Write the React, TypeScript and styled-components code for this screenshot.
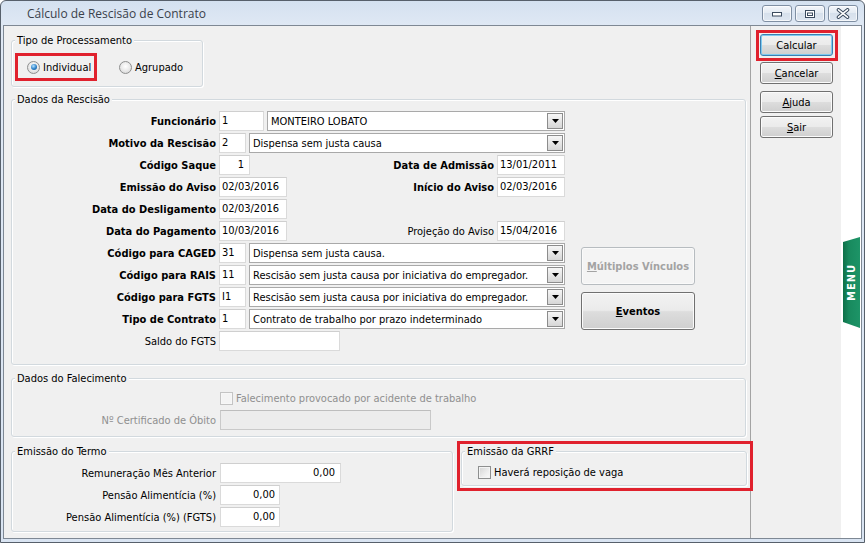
import React from 'react';
import styled, { createGlobalStyle } from 'styled-components';

const GlobalStyle = createGlobalStyle`
  html, body {
    margin: 0;
    padding: 0;
    background: #ffffff;
  }
  body {
    font-family: Tahoma, "DejaVu Sans Condensed", "Liberation Sans", sans-serif;
    font-size: 11px;
    color: #000;
  }
  *, *::before, *::after {
    box-sizing: border-box;
  }
`;

const Window = styled.div`
  width: 865px;
  height: 543px;
  display: flex;
  flex-direction: column;
  padding: 0 2px 3px 2px;
  border: 1px solid #57606b;
  border-radius: 6px 6px 0 0;
  background: linear-gradient(180deg, #d4e1f0 0px, #dfe8f4 24px, #d9e4f2 100%);
  overflow: hidden;
`;

const TitleBar = styled.div`
  height: 24px;
  flex-shrink: 0;
  display: flex;
  align-items: flex-start;
  padding-left: 24px;
`;

const Title = styled.span`
  flex: 1;
  padding-top: 1px;
  font-family: "Open Sans", "Noto Sans", sans-serif;
  font-size: 12px;
  line-height: 24px;
  color: #3a414b;
`;

const Controls = styled.div`
  display: flex;
  gap: 3px;
  margin: 4px 4px 0 0;
`;

const CaptionButton = styled.div`
  width: 30px;
  height: 17px;
  border: 1px solid #7f8fa3;
  border-radius: 3px;
  background: linear-gradient(180deg, #f3f6fa 0%, #e4ebf3 45%, #d6e0ec 50%, #dfe7f1 100%);
  box-shadow: inset 0 0 0 1px rgba(255, 255, 255, 0.7);
  display: flex;
  align-items: center;
  justify-content: center;
`;

const Client = styled.div`
  flex: 1;
  min-height: 0;
  display: flex;
  border: 1px solid #7e8894;
`;

const LeftPanel = styled.div`
  width: 747px;
  flex-shrink: 0;
  display: flex;
  flex-direction: column;
  padding: 14px 4px 0 7px;
  background: #f0f0f0;
  border-right: 1px solid #a3a3a3;
`;

const RightPanel = styled.div`
  width: 90px;
  flex-shrink: 0;
  display: flex;
  flex-direction: column;
  align-items: flex-start;
  padding: 4px 0 0 5px;
  background: #f0f0f0;
`;

const MenuStrip = styled.div`
  flex: 1;
  background: #ffffff;
  padding: 211px 0 0 2px;
`;

const MenuTab = styled.div`
  width: 17px;
  height: 91px;
  display: flex;
  align-items: center;
  justify-content: center;
  background: linear-gradient(90deg, #0d7048 0%, #188a5e 35%, #1d9467 100%);
  clip-path: polygon(0 5px, 100% 0, 100% 100%, 0 calc(100% - 6px));
`;

const MenuText = styled.span`
  writing-mode: vertical-rl;
  transform: rotate(180deg);
  color: #ffffff;
  font-weight: bold;
  font-size: 11px;
  letter-spacing: 1px;
`;

const Group = styled.div<{ $width?: number; $mt?: number }>`
  display: flex;
  flex-direction: column;
  flex-shrink: 0;
  width: ${(p) => (p.$width ? `${p.$width}px` : 'auto')};
  margin-top: ${(p) => p.$mt ?? 0}px;
  border: 1px solid #d2d9de;
  border-radius: 3px;
  box-shadow: inset 1px 1px 0 #ffffff, 1px 1px 0 #ffffff;
`;

const Caption = styled.div`
  align-self: flex-start;
  margin: -7px 0 0 3px;
  padding: 0 2px;
  line-height: 13px;
  background: #f0f0f0;
  white-space: nowrap;
`;

const GroupBody = styled.div<{ $pad: string; $mt: number }>`
  display: flex;
  margin-top: ${(p) => p.$mt}px;
  padding: ${(p) => p.$pad};
`;

const Highlight = styled.div<{ $pad: string; $width?: number }>`
  position: relative;
  z-index: 1;
  flex-shrink: 0;
  width: ${(p) => (p.$width ? `${p.$width}px` : 'auto')};
  padding: ${(p) => p.$pad};
  border: 3px solid #e0212d;
  display: flex;
  align-items: center;
`;

const Rows = styled.div`
  display: flex;
  flex-direction: column;
  gap: 2px;
`;

const Row = styled.div<{ $label?: number; $gap?: number; $width?: number }>`
  display: grid;
  grid-template-columns: ${(p) => p.$label ?? 196}px ${(p) => p.$width ?? 346}px;
  column-gap: ${(p) => p.$gap ?? 3}px;
  align-items: center;
  height: 20px;
`;

const Label = styled.span<{ $bold?: boolean; $muted?: boolean }>`
  text-align: right;
  white-space: nowrap;
  font-weight: ${(p) => (p.$bold ? 'bold' : 'normal')};
  color: ${(p) => (p.$muted ? '#8f8f8f' : '#000')};
`;

const Cell = styled.div`
  display: flex;
  align-items: center;
  gap: 3px;
  min-width: 0;
`;

const Side = styled.div`
  margin-left: auto;
  display: flex;
  align-items: center;
  gap: 3px;
`;

const Field = styled.div<{ $width: number; $right?: boolean; $disabled?: boolean; $pr?: number }>`
  width: ${(p) => p.$width}px;
  height: 20px;
  flex-shrink: 0;
  padding: 0 ${(p) => p.$pr ?? 3}px 0 2px;
  border: 1px solid ${(p) => (p.$disabled ? '#c9c9c9' : '#dadada')};
  border-top-color: ${(p) => (p.$disabled ? '#bdbdbd' : '#cfcfcf')};
  background: ${(p) => (p.$disabled ? '#ececec' : '#ffffff')};
  line-height: 18px;
  text-align: ${(p) => (p.$right ? 'right' : 'left')};
  white-space: nowrap;
  overflow: hidden;
`;

const Combo = styled.div<{ $width: number }>`
  width: ${(p) => p.$width}px;
  height: 20px;
  flex-shrink: 0;
  display: flex;
  align-items: center;
  padding: 0 1px 0 3px;
  border: 1px solid #a9a9a9;
  background: #ffffff;
`;

const ComboText = styled.span`
  flex: 1;
  white-space: nowrap;
  overflow: hidden;
`;

const ComboArrow = styled.span`
  width: 16px;
  height: 16px;
  display: flex;
  align-items: center;
  justify-content: center;
  border: 1px solid #8c8c8c;
  background: linear-gradient(180deg, #f6f6f6 0%, #e6e6e6 50%, #d6d6d6 100%);
`;

const RadioItem = styled.span`
  display: flex;
  align-items: center;
  gap: 3px;
  white-space: nowrap;
`;

const RadioDot = styled.span<{ $checked?: boolean }>`
  width: 13px;
  height: 13px;
  border-radius: 50%;
  border: 1px solid #8e8f8f;
  background: radial-gradient(circle at 50% 40%, #ffffff 0%, #e8e8e8 55%, #cfcfcf 100%);
  display: flex;
  align-items: center;
  justify-content: center;
  &::before {
    content: '';
    display: ${(p) => (p.$checked ? 'block' : 'none')};
    width: 6px;
    height: 6px;
    border-radius: 50%;
    background: radial-gradient(circle at 40% 35%, #b5e3ff 0%, #2a7fc8 55%, #124f86 100%);
  }
`;

const CheckItem = styled.span<{ $muted?: boolean; $ml?: number }>`
  display: flex;
  align-items: center;
  gap: 3px;
  margin-left: ${(p) => p.$ml ?? 0}px;
  white-space: nowrap;
  color: ${(p) => (p.$muted ? '#8f8f8f' : '#000')};
`;

const CheckBox = styled.span<{ $disabled?: boolean }>`
  width: 13px;
  height: 13px;
  flex-shrink: 0;
  border: 1px solid ${(p) => (p.$disabled ? '#c4c4c4' : '#8e8f8f')};
  background: ${(p) =>
    p.$disabled ? '#f4f4f4' : 'linear-gradient(135deg, #d3d3d3 0%, #eeeeee 60%, #fbfbfb 100%)'};
  box-shadow: inset 0 0 0 1px ${(p) => (p.$disabled ? '#f7f7f7' : '#f4f4f4')};
`;

const Button = styled.div<{ $default?: boolean; $mt?: number; $ml?: number }>`
  width: 73px;
  height: 22px;
  margin-top: ${(p) => p.$mt ?? 0}px;
  margin-left: ${(p) => p.$ml ?? 0}px;
  display: flex;
  align-items: center;
  justify-content: center;
  border: 1px solid ${(p) => (p.$default ? '#3c7fb1' : '#707070')};
  border-radius: 3px;
  background: linear-gradient(180deg, #f2f2f2 0%, #ebebeb 48%, #dddddd 52%, #cfcfcf 100%);
  box-shadow: inset 0 0 0 1px ${(p) => (p.$default ? '#7fcaf0' : '#fbfbfb')};
  white-space: nowrap;
`;

const BigButton = styled.div<{ $disabled?: boolean }>`
  width: 114px;
  height: 38px;
  display: flex;
  align-items: center;
  justify-content: center;
  font-weight: bold;
  border: 1px solid ${(p) => (p.$disabled ? '#b7bcc0' : '#707070')};
  border-radius: 3px;
  color: ${(p) => (p.$disabled ? '#a3a3a3' : '#000')};
  background: ${(p) =>
    p.$disabled
      ? '#f4f4f4'
      : 'linear-gradient(180deg, #f2f2f2 0%, #ebebeb 48%, #dddddd 52%, #cfcfcf 100%)'};
  box-shadow: inset 0 0 0 1px ${(p) => (p.$disabled ? '#fafafa' : '#fbfbfb')};
  white-space: nowrap;
`;

const SideButtons = styled.div`
  display: flex;
  flex-direction: column;
  gap: 7px;
  margin-left: 16px;
  padding-top: 136px;
`;

const BottomRow = styled.div`
  display: flex;
  align-items: flex-start;
  gap: 4px;
  margin-top: 4px;
`;

const Arrow = () => (
  <svg width="7" height="4" viewBox="0 0 7 4">
    <polygon points="0,0 7,0 3.5,4" fill="#000" />
  </svg>
);

const Input: React.FC<{ w: number; v?: string; right?: boolean; pr?: number; disabled?: boolean }> = ({
  w,
  v = '',
  right,
  pr,
  disabled,
}) => (
  <Field $width={w} $right={right} $pr={pr} $disabled={disabled}>
    {v}
  </Field>
);

const Select: React.FC<{ w: number; v: string }> = ({ w, v }) => (
  <Combo $width={w}>
    <ComboText>{v}</ComboText>
    <ComboArrow>
      <Arrow />
    </ComboArrow>
  </Combo>
);

const MOTIVO_RAIS = 'Rescisão sem justa causa por iniciativa do empregador.';

const App: React.FC = () => (
  <>
    <GlobalStyle />
    <Window>
      <TitleBar>
        <Title>Cálculo de Rescisão de Contrato</Title>
        <Controls>
          <CaptionButton>
            <svg width="12" height="6" viewBox="0 0 12 6">
              <rect x="1.5" y="1.5" width="9" height="3.5" fill="#fff" stroke="#3b4b5e" />
            </svg>
          </CaptionButton>
          <CaptionButton>
            <svg width="12" height="10" viewBox="0 0 12 10">
              <rect x="1.5" y="1.5" width="9" height="7" fill="#fff" stroke="#3b4b5e" />
              <rect x="3.5" y="4" width="5" height="2.5" fill="none" stroke="#3b4b5e" />
            </svg>
          </CaptionButton>
          <CaptionButton>
            <svg width="14" height="11" viewBox="0 0 14 11">
              <path d="M2.5 1.8 L11.5 9.2 M11.5 1.8 L2.5 9.2" stroke="#3b4b5e" strokeWidth="3.6" strokeLinecap="round" />
              <path d="M2.5 1.8 L11.5 9.2 M11.5 1.8 L2.5 9.2" stroke="#ffffff" strokeWidth="1.6" strokeLinecap="round" />
            </svg>
          </CaptionButton>
        </Controls>
      </TitleBar>
      <Client>
        <LeftPanel>
          <Group $width={192}>
            <Caption>Tipo de Processamento</Caption>
            <GroupBody $mt={6} $pad="0 0 5px 3px">
              <Highlight $width={82} $pad="0 0 0 9px" style={{ height: 28 }}>
                <RadioItem>
                  <RadioDot $checked />
                  Individual
                </RadioItem>
              </Highlight>
              <RadioItem style={{ marginLeft: 22 }}>
                <RadioDot />
                Agrupado
              </RadioItem>
            </GroupBody>
          </Group>

          <Group $mt={12}>
            <Caption>Dados da Rescisão</Caption>
            <GroupBody $mt={5} $pad="0 0 13px 8px">
              <Rows>
                <Row>
                  <Label $bold>Funcionário</Label>
                  <Cell>
                    <Input w={45} v="1" />
                    <Select w={298} v="MONTEIRO LOBATO" />
                  </Cell>
                </Row>
                <Row>
                  <Label $bold>Motivo da Rescisão</Label>
                  <Cell>
                    <Input w={27} v="2" />
                    <Select w={316} v="Dispensa sem justa causa" />
                  </Cell>
                </Row>
                <Row>
                  <Label $bold>Código Saque</Label>
                  <Cell>
                    <Input w={31} v="1" right pr={5} />
                    <Side>
                      <Label $bold>Data de Admissão</Label>
                      <Input w={68} v="13/01/2011" />
                    </Side>
                  </Cell>
                </Row>
                <Row>
                  <Label $bold>Emissão do Aviso</Label>
                  <Cell>
                    <Input w={68} v="02/03/2016" />
                    <Side>
                      <Label $bold>Início do Aviso</Label>
                      <Input w={68} v="02/03/2016" />
                    </Side>
                  </Cell>
                </Row>
                <Row>
                  <Label $bold>Data do Desligamento</Label>
                  <Cell>
                    <Input w={68} v="02/03/2016" />
                  </Cell>
                </Row>
                <Row>
                  <Label $bold>Data do Pagamento</Label>
                  <Cell>
                    <Input w={68} v="10/03/2016" />
                    <Side>
                      <Label>Projeção do Aviso</Label>
                      <Input w={68} v="15/04/2016" />
                    </Side>
                  </Cell>
                </Row>
                <Row>
                  <Label $bold>Código para CAGED</Label>
                  <Cell>
                    <Input w={27} v="31" />
                    <Select w={316} v="Dispensa sem justa causa." />
                  </Cell>
                </Row>
                <Row>
                  <Label $bold>Código para RAIS</Label>
                  <Cell>
                    <Input w={27} v="11" />
                    <Select w={316} v={MOTIVO_RAIS} />
                  </Cell>
                </Row>
                <Row>
                  <Label $bold>Código para FGTS</Label>
                  <Cell>
                    <Input w={27} v="I1" />
                    <Select w={316} v={MOTIVO_RAIS} />
                  </Cell>
                </Row>
                <Row>
                  <Label $bold>Tipo de Contrato</Label>
                  <Cell>
                    <Input w={27} v="1" />
                    <Select w={316} v="Contrato de trabalho por prazo indeterminado" />
                  </Cell>
                </Row>
                <Row>
                  <Label>Saldo do FGTS</Label>
                  <Cell>
                    <Input w={121} />
                  </Cell>
                </Row>
              </Rows>
              <SideButtons>
                <BigButton $disabled>
                  <span>
                    <u>M</u>últiplos Vínculos
                  </span>
                </BigButton>
                <BigButton>
                  <span>
                    <u>E</u>ventos
                  </span>
                </BigButton>
              </SideButtons>
            </GroupBody>
          </Group>

          <Group $mt={13}>
            <Caption>Dados do Falecimento</Caption>
            <GroupBody $mt={3} $pad="0 0 6px 8px">
              <Rows>
                <Row $gap={4}>
                  <span />
                  <Cell>
                    <CheckItem $muted>
                      <CheckBox $disabled />
                      Falecimento provocado por acidente de trabalho
                    </CheckItem>
                  </Cell>
                </Row>
                <Row $gap={4}>
                  <Label $muted>Nº Certificado de Óbito</Label>
                  <Cell>
                    <Input w={211} disabled />
                  </Cell>
                </Row>
              </Rows>
            </GroupBody>
          </Group>

          <BottomRow>
            <Group $width={442} $mt={10}>
              <Caption>Emissão do Termo</Caption>
              <GroupBody $mt={5} $pad="0 0 4px 8px">
                <Rows>
                  <Row $gap={4} $width={200}>
                    <Label>Remuneração Mês Anterior</Label>
                    <Cell>
                      <Input w={121} v="0,00" right pr={5} />
                    </Cell>
                  </Row>
                  <Row $gap={4} $width={200}>
                    <Label>Pensão Alimentícia (%)</Label>
                    <Cell>
                      <Input w={60} v="0,00" right pr={4} />
                    </Cell>
                  </Row>
                  <Row $gap={4} $width={200}>
                    <Label>Pensão Alimentícia (%) (FGTS)</Label>
                    <Cell>
                      <Input w={60} v="0,00" right pr={4} />
                    </Cell>
                  </Row>
                </Rows>
              </GroupBody>
            </Group>
            <Highlight $width={296} $pad="7px 3px 2px 1px">
              <Group $width={286}>
                <Caption>Emissão da GRRF</Caption>
                <GroupBody $mt={4} $pad="0 0 3px 16px">
                  <CheckItem style={{ height: 20 }}>
                    <CheckBox />
                    Haverá reposição de vaga
                  </CheckItem>
                </GroupBody>
              </Group>
            </Highlight>
          </BottomRow>
        </LeftPanel>

        <RightPanel>
          <Highlight $pad="1px 2px 2px 1px">
            <Button $default>Calcular</Button>
          </Highlight>
          <Button $mt={1} $ml={4}>
            <span>
              <u>C</u>ancelar
            </span>
          </Button>
          <Button $mt={7} $ml={4}>
            <span>
              <u>A</u>juda
            </span>
          </Button>
          <Button $mt={3} $ml={4}>
            <span>
              <u>S</u>air
            </span>
          </Button>
        </RightPanel>

        <MenuStrip>
          <MenuTab>
            <MenuText>MENU</MenuText>
          </MenuTab>
        </MenuStrip>
      </Client>
    </Window>
  </>
);

export default App;
